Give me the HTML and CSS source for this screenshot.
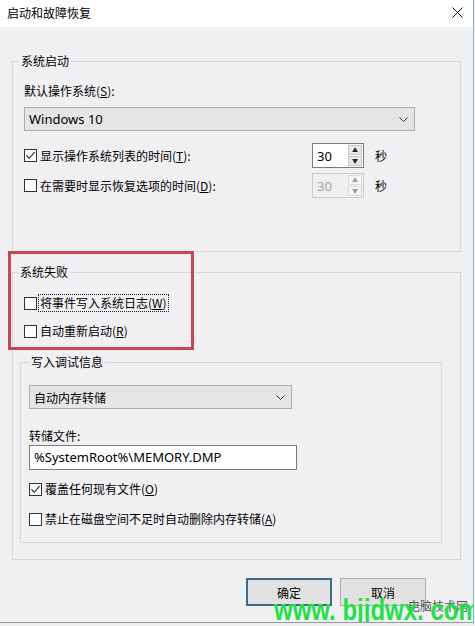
FILE: index.html
```html
<!DOCTYPE html>
<html lang="zh-CN">
<head>
  <meta charset="UTF-8" />
  <title>启动和故障恢复</title>
  <link rel="stylesheet" href="styles.css">
</head>
<body>
  <div class="window">
    <div class="titlebar">
      <span class="title">启动和故障恢复</span>
      <svg class="close" width="11" height="11" viewBox="0 0 11 11">
        <path d="M0.5 0.5 L10.5 10.5 M10.5 0.5 L0.5 10.5" stroke="#111" stroke-width="1" fill="none" />
      </svg>
    </div>

    <div class="dialog">
      <fieldset class="group group-start">
        <legend>系统启动</legend>
        <div class="field-label">默认操作系统(<u>S</u>):</div>
        <div class="select select-os">
          <span class="select-text">Windows 10</span>
          <svg class="chevron" width="9" height="5" viewBox="0 0 9 5"><path d="M0.5 0.5 L4.5 4.5 L8.5 0.5" stroke="#333" fill="none" /></svg>
        </div>
        <div class="opt-row">
          <label class="check check-wide"><span class="box checked"><svg width="11" height="11" viewBox="0 0 11 11"><path d="M1.5 5.5 L4.2 8.3 L9.6 2.2" stroke="#222" stroke-width="1.1" fill="none" /></svg></span>显示操作系统列表的时间(<u>T</u>):</label>
          <div class="spin">
            <span class="spin-value">30</span>
            <div class="spin-btns">
              <span class="spin-btn">▲</span>
              <span class="spin-btn">▼</span>
            </div>
          </div>
          <span class="unit">秒</span>
        </div>
        <div class="opt-row opt-row-second">
          <label class="check check-wide"><span class="box"></span>在需要时显示恢复选项的时间(<u>D</u>):</label>
          <div class="spin spin-disabled">
            <span class="spin-value">30</span>
            <div class="spin-btns">
              <span class="spin-btn">▲</span>
              <span class="spin-btn">▼</span>
            </div>
          </div>
          <span class="unit">秒</span>
        </div>
      </fieldset>

      <fieldset class="group group-failure">
        <legend>系统失败</legend>
        <label class="check check-first"><span class="box"></span><span class="focus-ring">将事件写入系统日志(<u>W</u>)</span></label>
        <label class="check check-next"><span class="box"></span>自动重新启动(<u>R</u>)</label>

        <fieldset class="group group-debug">
          <legend>写入调试信息</legend>
          <div class="select select-dump">
            <span class="select-text cjk">自动内存转储</span>
            <svg class="chevron" width="9" height="5" viewBox="0 0 9 5"><path d="M0.5 0.5 L4.5 4.5 L8.5 0.5" stroke="#333" fill="none" /></svg>
          </div>
          <div class="field-label dump-label">转储文件:</div>
          <div class="textbox">%SystemRoot%\MEMORY.DMP</div>
          <label class="check check-overwrite"><span class="box checked"><svg width="11" height="11" viewBox="0 0 11 11"><path d="M1.5 5.5 L4.2 8.3 L9.6 2.2" stroke="#222" stroke-width="1.1" fill="none" /></svg></span>覆盖任何现有文件(<u>O</u>)</label>
          <label class="check check-next-2"><span class="box"></span>禁止在磁盘空间不足时自动删除内存转储(<u>A</u>)</label>
        </fieldset>
      </fieldset>

      <div class="buttons">
        <button class="btn btn-default">确定</button>
        <button class="btn">取消</button>
      </div>
    </div>

    <div class="highlight"></div>
    <div class="watermark-small">电脑技术网</div>
    <div class="watermark">www. bjjdwx. com</div>
  </div>
</body>
</html>
```

FILE: styles.css
```css
body {
  margin: 0;
  background: #f0f0f3;
  font-family: "Noto Sans CJK SC", "Noto Sans", sans-serif;
  font-size: 12px;
  color: #000;
}
u { text-decoration: underline; text-underline-offset: 1px; }

.window {
  position: relative;
  width: 473px;
  height: 622px;
  background: #f0f0f3;
  border-right: 1px solid #8fb3d6;
  border-bottom: 1px solid #9a9a9a;
  overflow: hidden;
}

.titlebar {
  height: 27px;
  background: #fff;
  display: flex;
  align-items: center;
  justify-content: space-between;
  padding: 0 10px 0 7px;
}
.title { font-size: 12px; line-height: 16px; margin-top: -1px; }
.close { margin-top: -3px; }

.dialog {
  padding: 26px 12px 0 12px;
}

.group {
  margin: 0;
  padding: 0 0 0 11px;
  border: 1px solid #d9d9dc;
  min-width: 0;
}
.group legend {
  margin-left: -5px;
  padding: 0 2px;
  line-height: 16px;
  height: 16px;
}
.group-start { padding-bottom: 53px; }
.group-failure { margin-top: 12px; padding-bottom: 16px; padding-left: 0; }
.group-failure > legend { margin-left: 5px; }
.group-failure > .check { margin-left: 11px; }
.group-debug {
  margin: 15px 18px 0 7px;
  padding: 0 0 15px 8px;
}
.group-debug legend { margin-left: 0; }

.field-label { margin-top: 14px; line-height: 16px; height: 16px; }
.dump-label { margin-top: 19px; }

.select {
  box-sizing: border-box;
  height: 24px;
  background: #e5e5e5;
  border: 1px solid #adadad;
  display: flex;
  align-items: center;
  justify-content: space-between;
  padding: 0 6px 0 4px;
}
.select-os { margin-top: 8px; width: 391px; }
.select-dump { margin-top: 15px; width: 263px; }
.select-text { font-family: "Noto Sans", "Noto Sans CJK SC", sans-serif; font-size: 13px; }
.select-text.cjk { font-family: "Noto Sans CJK SC", sans-serif; font-size: 12px; }

.opt-row {
  margin-top: 12px;
  height: 25px;
  display: flex;
  align-items: center;
}
.opt-row-second { margin-top: 5px; }

.check {
  display: flex;
  align-items: center;
  height: 16px;
  line-height: 16px;
  white-space: nowrap;
}
.check-wide { width: 288px; }
.check-first { margin-top: 15px; }
.check-next { margin-top: 12px; }
.check-overwrite { margin-top: 11px; }
.check-next-2 { margin-top: 14px; }

.box {
  box-sizing: border-box;
  width: 13px;
  height: 13px;
  border: 1px solid #333;
  background: #fff;
  margin-right: 3px;
  display: flex;
  align-items: center;
  justify-content: center;
  flex: none;
}
.focus-ring {
  outline: 1px dotted #222;
  outline-offset: 0;
  padding: 0 1px;
  margin-left: -1px;
}

.spin {
  box-sizing: border-box;
  width: 52px;
  height: 25px;
  background: #fff;
  border: 1px solid #7a7a7a;
  display: flex;
  justify-content: space-between;
  align-items: center;
  padding: 0 1px 0 4px;
}
.spin-value { font-family: "Noto Sans", sans-serif; font-size: 13px; }
.spin-btns {
  display: flex;
  flex-direction: column;
  gap: 1px;
}
.spin-btn {
  box-sizing: border-box;
  width: 14px;
  height: 10px;
  background: #e8e8e8;
  border: 1px solid #c4c4c4;
  font-size: 6px;
  line-height: 8px;
  text-align: center;
  color: #222;
}
.spin-disabled {
  background: #f0f0f3;
  border-color: #cccccc;
}
.spin-disabled .spin-value { color: #a0a0a0; }
.spin-disabled .spin-btn { background: #f4f4f4; border-color: #dcdcdc; color: #9a9a9a; }
.unit { margin-left: 11px; font-size: 12px; }

.textbox {
  box-sizing: border-box;
  margin-top: 1px;
  width: 268px;
  height: 25px;
  background: #fff;
  border: 1px solid #7a7a7a;
  padding: 0 4px;
  line-height: 23px;
  font-family: "Noto Sans", sans-serif;
  font-size: 13px;
}

.buttons {
  margin-top: 18px;
  display: flex;
  justify-content: flex-end;
  gap: 8px;
  padding-right: 35px;
}
.btn {
  box-sizing: border-box;
  width: 86px;
  height: 28px;
  background: #e1e1e1;
  border: 1px solid #adadad;
  font-family: "Noto Sans CJK SC", sans-serif;
  font-size: 12px;
  color: #000;
  padding: 0;
}
.btn-default { border: 2px solid #3e6c88; }

.highlight {
  position: absolute;
  left: 8px;
  top: 251px;
  width: 180px;
  height: 93px;
  border: 3px solid #c8474f;
}

.watermark {
  position: absolute;
  left: 274px;
  top: 592px;
  font-family: "Liberation Sans", Arial, sans-serif;
  font-weight: bold;
  font-size: 24px;
  line-height: 28px;
  color: #22e04a;
  white-space: nowrap;
  transform: scaleY(1.25);
  transform-origin: left top;
}
.watermark-small {
  position: absolute;
  left: 408px;
  top: 597px;
  font-size: 12px;
  color: #555;
}
```
